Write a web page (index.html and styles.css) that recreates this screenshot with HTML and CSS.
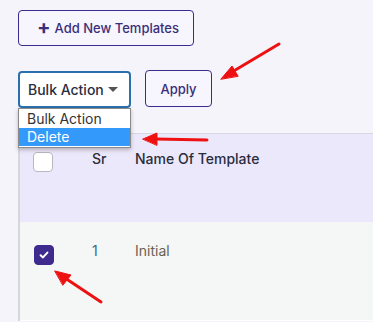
FILE: index.html
```html
<!DOCTYPE html>
<html>
<head>
<meta charset="utf-8">
<link rel="stylesheet" href="styles.css">
</head>
<body>
<div class="page">
  <div class="top">
    <button class="btn-add"><span class="plus">+</span> Add New Templates</button>
  </div>
  <div class="controls">
    <div class="select-wrap">
      <div class="select">Bulk Action <span class="caret"></span></div>
      <ul class="options">
        <li>Bulk Action</li>
        <li class="active">Delete</li>
      </ul>
    </div>
    <button class="btn-apply">Apply</button>
  </div>
  <div class="table">
    <div class="thead">
      <div class="cell chk"><span class="checkbox"></span></div>
      <div class="cell sr">Sr</div>
      <div class="cell name">Name Of Template</div>
    </div>
    <div class="trow">
      <div class="cell chk"><span class="checkbox checked"><svg viewBox="0 0 10 10" width="10" height="10"><path d="M1.6 5.2 L4 7.4 L8.4 2.6" fill="none" stroke="#fff" stroke-width="2" stroke-linecap="round" stroke-linejoin="round"/></svg></span></div>
      <div class="cell sr num">1</div>
      <div class="cell name val">Initial</div>
    </div>
  </div>
</div>
<svg class="arrows" width="373" height="322" viewBox="0 0 373 322">
  <g stroke="#ee1111" stroke-width="3" stroke-linecap="round" fill="#ee1111">
    <line x1="279" y1="44" x2="232" y2="72"/>
    <polygon points="221,79 232,66 238,76" stroke-width="1"/>
    <line x1="207" y1="140" x2="156" y2="139"/>
    <polygon points="143,139 157,133 157,145" stroke-width="1"/>
    <line x1="101" y1="302" x2="65" y2="278"/>
    <polygon points="55,271 71,275 63,285" stroke-width="1"/>
  </g>
</svg>
</body>
</html>
```
FILE: styles.css
```css
html, body {
  margin: 0;
  padding: 0;
  background: #f5f4fb;
  font-family: Inter, "Noto Sans", sans-serif;
  overflow: hidden;
}
.page {
  padding: 10px 0 0 18px;
}
.top {
  display: flex;
}
.btn-add {
  height: 36px;
  width: 176px;
  border: 1px solid #3d2a8a;
  border-radius: 4px;
  background: #f7f5fd;
  color: #3b2f7a;
  font-family: Inter, sans-serif;
  font-size: 13px;
  font-weight: 500;
  padding: 0 0 0 18px;
  display: flex;
  align-items: center;
  gap: 4px;
}
.plus {
  font-size: 20px;
  font-weight: 700;
  line-height: 1;
  margin-top: -2px;
}
.controls {
  display: flex;
  align-items: flex-start;
  gap: 14px;
  margin-top: 25px;
}
.select-wrap {
  position: relative;
}
.select {
  box-sizing: border-box;
  width: 113px;
  height: 37px;
  border: 2px solid #2b70ad;
  border-radius: 4px;
  background: #fff;
  color: #2a2d3e;
  font-size: 14px;
  font-weight: 500;
  display: flex;
  align-items: center;
  padding-left: 8px;
  gap: 4px;
}
.caret {
  width: 0;
  height: 0;
  border-left: 5px solid transparent;
  border-right: 5px solid transparent;
  border-top: 5px solid #555;
}
.options {
  position: absolute;
  top: 37px;
  left: 0;
  margin: 0;
  padding: 1px 0;
  list-style: none;
  width: 113px;
  box-sizing: border-box;
  background: #fff;
  border: 1px solid #8a8a8a;
  box-shadow: 0 2px 4px rgba(0,0,0,0.25);
  z-index: 5;
  font-size: 14px;
}
.options li {
  height: 18px;
  line-height: 18px;
  padding-left: 8px;
  color: #333;
}
.options li.active {
  background: #3399fb;
  color: #fff;
}
.btn-apply {
  box-sizing: border-box;
  height: 37px;
  width: 67px;
  margin-top: -1px;
  border: 1px solid #3d2a8a;
  border-radius: 4px;
  background: #f7f5fd;
  color: #3b2f7a;
  font-family: Inter, sans-serif;
  font-size: 13px;
  font-weight: 500;
}
.table {
  margin-top: 25px;
  border-left: 2px solid #d6d6dc;
  border-top: 1px solid #d8d8e0;
}
.thead, .trow {
  display: grid;
  grid-template-columns: 72px 43px 1fr;
}
.thead {
  background: #ece8fb;
  height: 88px;
}
.trow {
  background: #f5f7f7;
  height: 98px;
  border-bottom: 1px solid #fff;
}
.cell {
  font-size: 14px;
  font-weight: 500;
  color: #2a2d3e;
}
.thead .cell { padding-top: 18px; }
.thead .sr, .thead .name { padding-top: 16px; }
.trow .cell { padding-top: 23px; }
.trow .sr, .trow .name { padding-top: 20px; font-weight: 400; }
.chk { padding-left: 13px; }
.checkbox {
  box-sizing: border-box;
  display: flex;
  align-items: center;
  justify-content: center;
  width: 20px;
  height: 20px;
  border: 1px solid #b8b8c0;
  border-radius: 4px;
  background: #fff;
}
.checkbox.checked {
  background: #3f2a8e;
  border-color: #3f2a8e;
  margin-left: 1px;
}
.num { color: #3a6a8a; }
.val { color: #6a6152; }
.arrows {
  position: absolute;
  left: 0;
  top: 0;
  pointer-events: none;
  z-index: 10;
}
```
